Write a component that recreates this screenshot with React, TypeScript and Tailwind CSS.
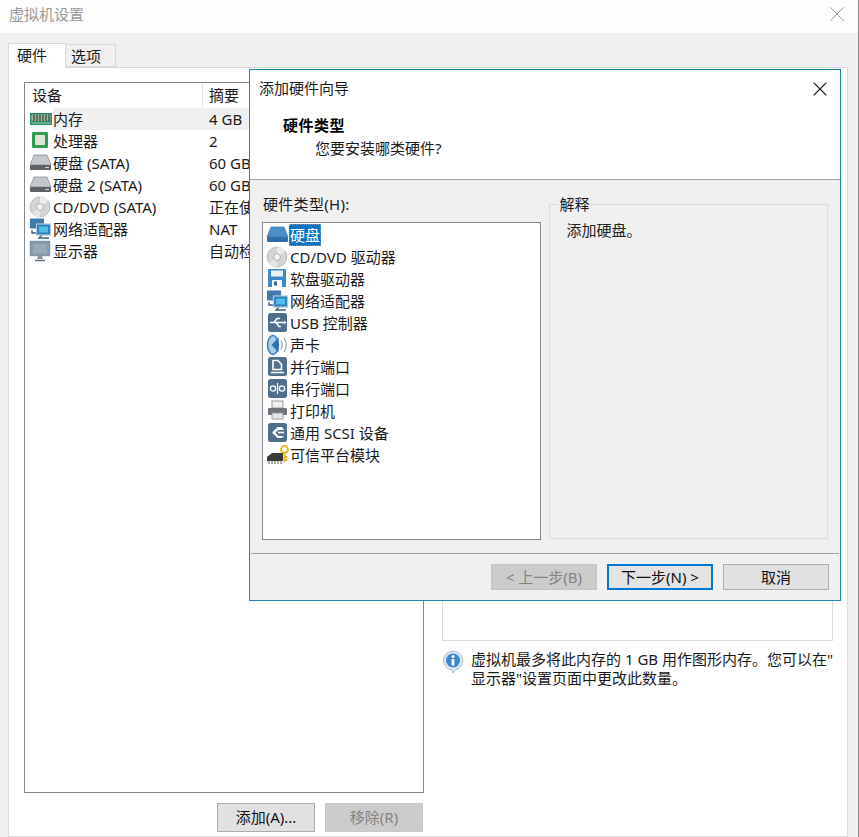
import type { ReactNode } from 'react';
import { X } from 'lucide-react';

const FONT = "font-['Noto_Sans','Noto_Sans_CJK_SC',sans-serif]";

// 小图标, 都是 24x22 的内联 SVG
const Svg = ({ children }: { children: ReactNode }) => (
    <svg viewBox="0 0 24 22" className="w-6 h-[22px] shrink-0">{children}</svg>
);

const RamIcon = () => (
    <Svg>
        <rect x="1" y="5" width="22" height="12" fill="#2a8a68" />
        <rect x="2.5" y="6.5" width="19" height="6.5" fill="#a5b8a0" />
        <path d="M5 6.5v6.5M8 6.5v6.5M11 6.5v6.5M14 6.5v6.5M17 6.5v6.5M20 6.5v6.5" stroke="#38584a" strokeWidth="1.4" />
        <path d="M2 15h20" stroke="#a8d0bc" strokeWidth="1" />
    </Svg>
);

const CpuIcon = () => (
    <Svg>
        <rect x="3" y="2" width="16" height="16" rx="1" fill="#2f9a52" />
        <rect x="6" y="5" width="10" height="10" rx="1" fill="#dfe3d8" />
    </Svg>
);

const DiskIcon = ({ blue }: { blue?: boolean }) => (
    <Svg>
        <path d="M5 3h13l4 10H1z" fill={blue ? '#4a90c8' : '#c4c8cc'} stroke={blue ? '#3f7fb4' : '#8a9096'} strokeWidth="0.8" />
        <rect x="1" y="13" width="21" height="5" rx="1" fill={blue ? '#2f6ea8' : '#5c6268'} />
        {!blue && <path d="M16 15.5h4" stroke="#c9ced2" strokeWidth="1.2" />}
    </Svg>
);

const CdIcon = () => (
    <Svg>
        <circle cx="11" cy="11" r="10" fill="#d2d4d6" stroke="#aeb2b6" strokeWidth="0.8" />
        <path d="M11 1a10 10 0 0 1 8 4l-8 6z" fill="#ececec" />
        <path d="M11 11L3 17a10 10 0 0 0 8 4z" fill="#e6e6e6" />
        <circle cx="11" cy="11" r="3.4" fill="#f4f4f4" stroke="#9ea2a6" strokeWidth="0.8" />
    </Svg>
);

const NetIcon = () => (
    <Svg>
        <rect x="1" y="0.5" width="14" height="10" fill="#3f79b0" />
        <path d="M3 12v3h6M13 17l-3 3h10" stroke="#3a5f86" strokeWidth="1.4" fill="none" />
        <rect x="7.5" y="6" width="14" height="11" fill="#2a80c0" stroke="#b4c4d2" strokeWidth="1.2" />
        <rect x="10" y="8.5" width="9" height="6" fill="#53bde8" />
    </Svg>
);

const MonitorIcon = () => (
    <Svg>
        <rect x="1.5" y="1.5" width="19" height="14" fill="#8799ab" stroke="#7f96ab" strokeWidth="1.4" />
        <rect x="4" y="4" width="14" height="9.5" fill="#98a8b6" />
        <path d="M9 16h4l1 3H8z" fill="#8a949c" />
        <path d="M6 20.5h10" stroke="#5e6b75" strokeWidth="1.4" />
    </Svg>
);

const FloppyIcon = () => (
    <Svg>
        <rect x="2" y="1" width="18" height="18" rx="1" fill="#3a8ac8" />
        <rect x="5" y="2.5" width="12" height="6" fill="#e8f2f8" />
        <rect x="6" y="12" width="10" height="7" fill="#f4f8fa" />
        <rect x="8" y="13.5" width="3" height="4" fill="#3a6a98" />
    </Svg>
);

const Tile = ({ children }: { children: ReactNode }) => (
    <Svg>
        <rect x="2" y="1" width="19" height="19" rx="2.5" fill="#4f6f8c" />
        {children}
    </Svg>
);

const UsbIcon = () => (
    <Tile>
        <path d="M4 10.5h14M8 10.5l3-4h3M10 10.5l3 4h2" stroke="#fff" strokeWidth="1.5" fill="none" />
        <path d="M18 8.5l2.5 2-2.5 2z" fill="#fff" />
    </Tile>
);

const SoundIcon = () => (
    <Svg>
        <ellipse cx="7" cy="11" rx="5.5" ry="9.5" fill="#a8cdea" stroke="#3a7cc0" strokeWidth="1.4" />
        <path d="M5.5 11l7-7.5v15z" fill="#2f70b4" />
        <path d="M15 6.5c1.6 3 1.6 6 0 9M18 4c3 4 3 10 0 14" stroke="#9aa8b4" strokeWidth="1.3" fill="none" />
    </Svg>
);

const ParallelIcon = () => (
    <Tile>
        <path d="M7 4.5h5l3.5 4v5H7zM5 16.5h13" stroke="#fff" strokeWidth="1.6" fill="none" />
    </Tile>
);

const SerialIcon = () => (
    <Tile>
        <circle cx="7" cy="10.5" r="2.6" stroke="#fff" strokeWidth="1.3" fill="none" />
        <circle cx="16" cy="10.5" r="2.6" stroke="#fff" strokeWidth="1.3" fill="none" />
        <path d="M11.5 5v11" stroke="#fff" strokeWidth="1.3" />
    </Tile>
);

const PrinterIcon = () => (
    <Svg>
        <rect x="6" y="1" width="11" height="7" fill="#f0f0f0" stroke="#9a9a9a" />
        <rect x="2" y="8" width="19" height="7" rx="1" fill="#6f7478" />
        <rect x="6" y="13" width="11" height="6" fill="#e8e8e8" stroke="#9a9a9a" />
    </Svg>
);

const ScsiIcon = () => (
    <Tile>
        <path d="M16 5h-4.5L6 10.5l5.5 5.5H16l2-2h-5.5L9.5 10.5 12.5 8H18z" fill="#fff" />
        <path d="M12 10.5h6" stroke="#fff" strokeWidth="1.7" />
    </Tile>
);

const TpmIcon = () => (
    <Svg>
        <path d="M1 17V13l5-4h11v8z" fill="#3a3a3a" />
        <path d="M3 17v3M6 17v3M9 17v3M12 17v3M15 17v3" stroke="#777" strokeWidth="1.1" />
        <circle cx="18.5" cy="5.5" r="3.4" fill="none" stroke="#e8b422" strokeWidth="2" />
        <path d="M18.5 9v9M18.5 13h3M18.5 16h3" stroke="#e8b422" strokeWidth="2" />
    </Svg>
);

const InfoIcon = () => (
    <svg viewBox="0 0 22 24" className="w-[22px] h-[24px] shrink-0">
        <path d="M11 1a10 9.5 0 0 1 3 18.5L11 23l-1-3.1A10 9.5 0 0 1 11 1z" fill="#dbe6f2" stroke="#a9bdd2" strokeWidth="1" />
        <circle cx="11" cy="10.5" r="7" fill="#3f86cf" />
        <circle cx="11" cy="6.5" r="1.6" fill="#fff" />
        <rect x="9.6" y="9" width="2.8" height="6.5" fill="#fff" />
    </svg>
);

const devices = [
    { icon: <RamIcon />, name: '内存', summary: '4 GB', active: true },
    { icon: <CpuIcon />, name: '处理器', summary: '2' },
    { icon: <DiskIcon />, name: '硬盘 (SATA)', summary: '60 GB' },
    { icon: <DiskIcon />, name: '硬盘 2 (SATA)', summary: '60 GB' },
    { icon: <CdIcon />, name: 'CD/DVD (SATA)', summary: '正在使' },
    { icon: <NetIcon />, name: '网络适配器', summary: 'NAT' },
    { icon: <MonitorIcon />, name: '显示器', summary: '自动检' },
];

const hardware = [
    { icon: <DiskIcon blue />, name: '硬盘', active: true },
    { icon: <CdIcon />, name: 'CD/DVD 驱动器' },
    { icon: <FloppyIcon />, name: '软盘驱动器' },
    { icon: <NetIcon />, name: '网络适配器' },
    { icon: <UsbIcon />, name: 'USB 控制器' },
    { icon: <SoundIcon />, name: '声卡' },
    { icon: <ParallelIcon />, name: '并行端口' },
    { icon: <SerialIcon />, name: '串行端口' },
    { icon: <PrinterIcon />, name: '打印机' },
    { icon: <ScsiIcon />, name: '通用 SCSI 设备' },
    { icon: <TpmIcon />, name: '可信平台模块' },
];

const AddHardwareDialog = () => (
    <div className="absolute left-[249px] top-[69px] w-[592px] h-[532px] flex flex-col border border-[#1f87ae] bg-[#f0f0f0] text-[15px] text-[#1a1a1a]">
        <div className="h-[110px] shrink-0 flex flex-col bg-white border-b border-[#a0a0a0]">
            <div className="h-[37px] flex items-center justify-between pl-[9px] pr-[8px]">
                <span>添加硬件向导</span>
                <X className="w-[24px] h-[24px] text-[#222]" strokeWidth={1.1} />
            </div>
            <div className="pl-[33px] pt-[9px] font-bold leading-[18px] text-black tracking-[0.5px]">硬件类型</div>
            <div className="pl-[65px] pt-[4px] leading-[20px]">您要安装哪类硬件?</div>
        </div>

        <div className="flex-1 flex gap-[8px] pl-[12px] pr-[12px] pt-[14px]">
            <div className="w-[280px] flex flex-col">
                <div className="h-[28px] pl-px leading-[20px] tracking-[0.3px]">硬件类型(H):</div>
                <div className="h-[318px] border border-[#828790] bg-white pt-[1px] pl-[4px]">
                    {hardware.map(item => (
                        <div key={item.name} className="h-[22px] flex items-center">
                            <span className="flex w-[22px]"><span className="-ml-[1px]">{item.icon}</span></span>
                            <span className={`px-[1px] leading-[22px] whitespace-nowrap ${item.active ? 'bg-[#0a74c4] text-white outline outline-dotted outline-[#7a9cc0] -outline-offset-1' : ''}`}>
                                {item.name}
                            </span>
                        </div>
                    ))}
                </div>
            </div>
            <fieldset className="w-[279px] h-[343px] mt-[2px] border border-[#dcdcdc] pl-[8px]">
                <legend className="px-[1px] leading-[16px]">解释</legend>
                <div className="pt-[8px] pl-[8px] leading-[20px] text-[#222]">添加硬盘。</div>
            </fieldset>
        </div>

        <div className="h-[47px] shrink-0 flex items-start justify-end gap-[10px] pt-[10px] pr-[10px] mx-px border-t border-[#a0a0a0]">
            <button className="w-[106px] h-[26px] bg-[#cccccc] border border-[#c4c4c4] text-[#838383] leading-[22px]">&lt; 上一步(B)</button>
            <button className="w-[106px] h-[26px] bg-[#e3e3e3] border-2 border-[#0078d7] text-[#111] leading-[20px]">下一步(N) &gt;</button>
            <button className="w-[106px] h-[26px] bg-[#e1e1e1] border border-[#adadad] text-[#111] leading-[22px]">取消</button>
        </div>
    </div>
);

export default function App() {
    return (
        <div className={`relative w-[859px] h-[837px] overflow-hidden flex flex-col bg-[#f0f0f0] border-r border-[#8c8c8c] text-[15px] text-[#1a1a1a] ${FONT}`}>
            {/* Заголовок окна */}
            <div className="h-[33px] shrink-0 bg-[#fdfdfd] flex items-center justify-between pl-[9px] pr-[8px] pb-[5px]">
                <span className="text-[#9a9a9a]">虚拟机设置</span>
                <X className="w-[26px] h-[26px] text-[#999]" strokeWidth={0.9} />
            </div>

            {/* Вкладки */}
            <div className="h-[34px] shrink-0 flex items-end pl-[8px]">
                <div className="w-[58px] h-[25px] -mb-px z-10 bg-white border border-b-0 border-[#d9d9d9] pl-[8px] leading-[22px]">硬件</div>
                <div className="w-[50px] h-[23px] bg-[#f0f0f0] border border-l-0 border-[#d9d9d9] pl-[5px] leading-[23px]">选项</div>
            </div>

            <div className="flex-1 ml-[8px] mr-[10px] flex gap-[18px] bg-white border border-[#d9d9d9] pl-[15px] pt-[14px]">
                <div className="w-[400px] flex flex-col">
                    <div className="h-[711px] border border-[#828790]">
                        <div className="h-[25px] flex leading-[25px] border-b border-white">
                            <div className="w-[178px] pl-[7px] border-r border-[#e5e5e5]">设备</div>
                            <div className="pl-[6px]">摘要</div>
                        </div>
                        {devices.map(d => (
                            <div key={d.name} className="h-[22px] flex items-center">
                                <div className="w-[178px] flex items-center pl-[4px]">
                                    {d.icon}
                                    <span className={`flex-1 leading-[22px] whitespace-nowrap ${d.active ? 'bg-[#f0f0f0]' : ''}`}>{d.name}</span>
                                </div>
                                <div className={`flex-1 pl-[6px] leading-[22px] whitespace-nowrap ${d.active ? 'bg-[#f0f0f0]' : ''}`}>{d.summary}</div>
                            </div>
                        ))}
                    </div>
                    <div className="flex justify-end gap-[10px] pt-[10px] pr-px">
                        <button className="w-[98px] h-[29px] bg-[#e1e1e1] border border-[#adadad] text-[#111] leading-[25px]">添加(A)...</button>
                        <button className="w-[98px] h-[29px] bg-[#cccccc] border border-[#c8c8c8] text-[#838383] leading-[25px]">移除(R)</button>
                    </div>
                </div>

                <div className="w-[391px] flex flex-col">
                    <div className="h-[559px] border border-[#dcdcdc]" />
                    <div className="flex gap-[7px] pt-[9px]">
                        <InfoIcon />
                        <p className="leading-[19px] whitespace-nowrap">虚拟机最多将此内存的 1 GB 用作图形内存。您可以在"<br />显示器"设置页面中更改此数量。</p>
                    </div>
                </div>
            </div>

            <AddHardwareDialog />
        </div>
    );
}
